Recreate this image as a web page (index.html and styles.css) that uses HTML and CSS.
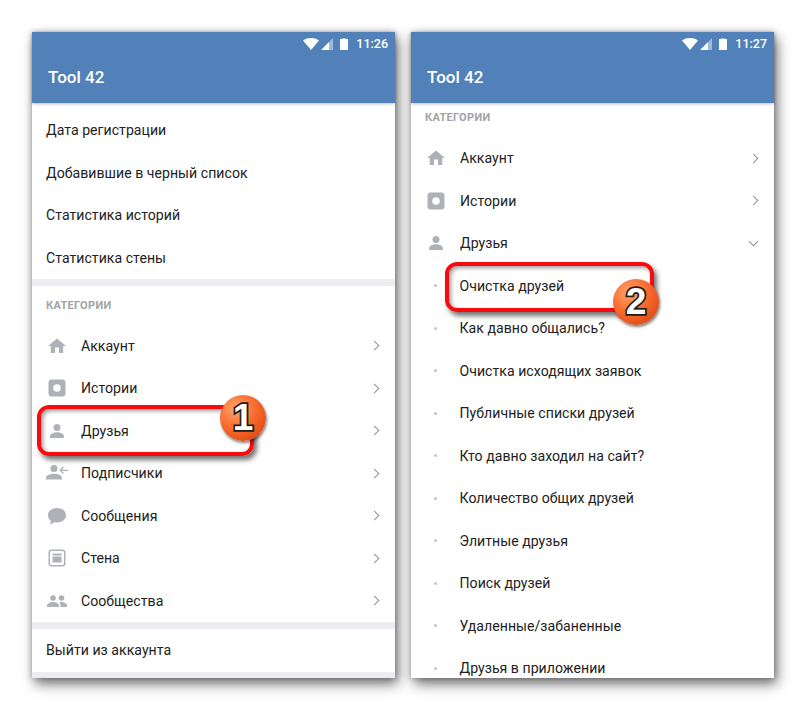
FILE: index.html
```html
<!DOCTYPE html>
<html lang="en">

<head>
    <meta charset="UTF-8">
    <title>Tool 42</title>
    <link rel="stylesheet" href="styles.css">
</head>

<body>
    <svg class="defs" width="0" height="0">
        <symbol id="i-home" viewBox="0 0 22 22"><path d="M9 18v-5.500h4V18h4.200v-7H20L11 3.500 2 11h2.800v7z"/></symbol>
        <symbol id="i-story" viewBox="0 0 22 22"><path fill-rule="evenodd" d="M5.500 2.500h11a3 3 0 0 1 3 3v11a3 3 0 0 1-3 3h-11a3 3 0 0 1-3-3v-11a3 3 0 0 1 3-3zM11 7.200a3.800 3.800 0 1 0 0 7.600 3.800 3.800 0 0 0 0-7.600z"/></symbol>
        <symbol id="i-person" viewBox="0 0 22 22"><circle cx="11" cy="7.500" r="3.500"/><path d="M4 18v-1.500c0-3 4.500-4.300 7-4.300s7 1.300 7 4.300V18z"/></symbol>
        <symbol id="i-follow" viewBox="0 0 22 22"><circle cx="8" cy="6.500" r="3.500"/><path d="M0 17.500V16c0-3 5-4.300 8-4.300s8 1.300 8 4.300v1.500z"/><path d="M22 7.700h-6.200l2.200-2.200-.9-.9-3.700 3.700 3.700 3.700.9-.9-2.200-2.200H22z"/></symbol>
        <symbol id="i-msg" viewBox="0 0 22 22"><path d="M11 3c5 0 9 3 9 7.200s-4 7.200-9 7.200c-1 0-2-.1-2.900-.4-1 1.200-2.600 2.300-4.300 2.500.7-1 1.100-2.300 1.100-3.700C3.200 14.500 2 12.500 2 10.200 2 6 6 3 11 3z"/></symbol>
        <symbol id="i-wall" viewBox="0 0 22 22"><path fill-rule="evenodd" d="M5.500 2.500h11a3 3 0 0 1 3 3v11a3 3 0 0 1-3 3h-11a3 3 0 0 1-3-3v-11a3 3 0 0 1 3-3zm0 1.500A1.500 1.500 0 0 0 4 5.500v11A1.500 1.500 0 0 0 5.500 18h11a1.500 1.500 0 0 0 1.500-1.500v-11A1.500 1.500 0 0 0 16.500 4z"/><path d="M6.500 6.500h9v2h-9zM6.500 9.500h9v6h-9z"/></symbol>
        <symbol id="i-group" viewBox="0 0 22 22"><circle cx="7" cy="8" r="2.800"/><circle cx="15.500" cy="8" r="2.800"/><path d="M1 17v-1.500c0-2.300 3.600-3.500 6-3.500s6 1.200 6 3.500V17z"/><path d="M14.500 17v-1.700c0-1.300-.6-2.300-1.600-3 .9-.2 1.900-.3 2.600-.3 2.300 0 5.500 1.200 5.500 3.500V17z"/></symbol>
    </svg>

    <div class="phone">
        <div class="header">
            <div class="status">
                <svg class="wifi" width="16" height="12" viewBox="0 0 16 12"><path d="M0 2.500C2 .8 5 0 8 0s6 .8 8 2.500L8 12z"/></svg>
                <svg class="signal" width="12" height="12" viewBox="0 0 12 12"><path class="dim" d="M12 0v12H8V4z"/><path d="M8 4v8H0z"/></svg>
                <svg class="battery" width="8" height="12" viewBox="0 0 8 12"><path class="dim" d="M2 0h4v1H2z"/><path d="M0 1h8v11H0z"/></svg>
                <span class="time">11:26</span>
            </div>
            <div class="title">Tool 42</div>
        </div>
        <div class="screen">
            <div class="list first-list">
                <div class="row">Дата регистрации</div>
                <div class="row">Добавившие в черный список</div>
                <div class="row">Статистика историй</div>
                <div class="row">Статистика стены</div>
            </div>
            <div class="divider"></div>
            <div class="heading">Категории</div>
            <div class="list">
                <div class="row"><svg class="icon"><use href="#i-home"/></svg><span class="label">Аккаунт</span><span class="chevron"></span></div>
                <div class="row"><svg class="icon"><use href="#i-story"/></svg><span class="label">Истории</span><span class="chevron"></span></div>
                <div class="row"><svg class="icon"><use href="#i-person"/></svg><span class="label">Друзья</span><span class="chevron"></span></div>
                <div class="row"><svg class="icon"><use href="#i-follow"/></svg><span class="label">Подписчики</span><span class="chevron"></span></div>
                <div class="row"><svg class="icon"><use href="#i-msg"/></svg><span class="label">Сообщения</span><span class="chevron"></span></div>
                <div class="row"><svg class="icon"><use href="#i-wall"/></svg><span class="label">Стена</span><span class="chevron"></span></div>
                <div class="row"><svg class="icon"><use href="#i-group"/></svg><span class="label">Сообщества</span><span class="chevron"></span></div>
            </div>
            <div class="divider"></div>
            <div class="row">Выйти из аккаунта</div>
            <div class="divider"></div>
        </div>
        <div class="frame frame-one"></div>
        <div class="badge badge-one">1</div>
    </div>

    <div class="phone">
        <div class="header">
            <div class="status">
                <svg class="wifi" width="16" height="12" viewBox="0 0 16 12"><path d="M0 2.500C2 .8 5 0 8 0s6 .8 8 2.500L8 12z"/></svg>
                <svg class="signal" width="12" height="12" viewBox="0 0 12 12"><path class="dim" d="M12 0v12H8V4z"/><path d="M8 4v8H0z"/></svg>
                <svg class="battery" width="8" height="12" viewBox="0 0 8 12"><path class="dim" d="M2 0h4v1H2z"/><path d="M0 1h8v11H0z"/></svg>
                <span class="time">11:27</span>
            </div>
            <div class="title">Tool 42</div>
        </div>
        <div class="screen">
            <div class="heading heading-top">Категории</div>
            <div class="list">
                <div class="row"><svg class="icon"><use href="#i-home"/></svg><span class="label">Аккаунт</span><span class="chevron"></span></div>
                <div class="row"><svg class="icon"><use href="#i-story"/></svg><span class="label">Истории</span><span class="chevron"></span></div>
                <div class="row"><svg class="icon"><use href="#i-person"/></svg><span class="label">Друзья</span><span class="chevron open"></span></div>
                <div class="row sub"><span class="dot"></span><span class="label">Очистка друзей</span></div>
                <div class="row sub"><span class="dot"></span><span class="label">Как давно общались?</span></div>
                <div class="row sub"><span class="dot"></span><span class="label">Очистка исходящих заявок</span></div>
                <div class="row sub"><span class="dot"></span><span class="label">Публичные списки друзей</span></div>
                <div class="row sub"><span class="dot"></span><span class="label">Кто давно заходил на сайт?</span></div>
                <div class="row sub"><span class="dot"></span><span class="label">Количество общих друзей</span></div>
                <div class="row sub"><span class="dot"></span><span class="label">Элитные друзья</span></div>
                <div class="row sub"><span class="dot"></span><span class="label">Поиск друзей</span></div>
                <div class="row sub"><span class="dot"></span><span class="label">Удаленные/забаненные</span></div>
                <div class="row sub"><span class="dot"></span><span class="label">Друзья в приложении</span></div>
            </div>
        </div>
        <div class="frame frame-two"></div>
        <div class="badge badge-two">2</div>
    </div>
</body>

</html>
```

FILE: styles.css
```css
body {
    display: flex;
    gap: 16px;
    margin: 0;
    padding: 32px;
    background-color: #fff;
    font-family: Roboto, Arial, sans-serif;
    color: #222;
}

.defs {
    position: absolute;
}

.phone {
    position: relative;
    display: flex;
    flex-direction: column;
    width: 363px;
    height: 646px;
    box-shadow: 3px 6px 12px rgba(0, 0, 0, 0.55), 0 0 6px rgba(0, 0, 0, 0.25);
}

.header {
    position: relative;
    z-index: 1;
    flex: none;
    height: 71px;
    background-color: #5181b8;
    box-shadow: 0 1px 3px rgba(0, 0, 0, 0.25);
    color: #fff;
}

.status {
    display: flex;
    align-items: center;
    justify-content: flex-end;
    height: 23px;
    padding: 0 7px 0 0;
    fill: #fff;
}

.dim {
    opacity: 0.45;
}

.wifi {
    margin-right: 2px;
}

.battery {
    margin: 0 8px 0 7px;
}

.time {
    font-size: 12.5px;
    font-weight: 500;
}

.title {
    padding: 12px 16px 0;
    font-size: 17px;
    font-weight: 500;
}

.screen {
    flex: 1;
    overflow: hidden;
    background-color: #fff;
}

.first-list {
    padding-top: 6px;
}

.row {
    display: flex;
    align-items: center;
    height: 42.5px;
    padding: 0 14px;
    font-size: 14.1px;
    letter-spacing: 0.03px;
}

.divider {
    height: 7px;
    background-color: #ebedf0;
}

.heading {
    display: flex;
    align-items: flex-end;
    height: 25.5px;
    padding: 0 14px 13px;
    font-size: 11px;
    font-weight: 700;
    letter-spacing: 0.3px;
    text-transform: uppercase;
    color: #a0a3a6;
}

.heading-top {
    height: 21.2px;
}

.icon {
    flex: none;
    width: 22px;
    height: 22px;
    margin-right: 13px;
    fill: #aeb1b8;
}

.dot {
    flex: none;
    width: 3px;
    height: 3px;
    margin: 0 23px 0 9px;
    border-radius: 50%;
    background-color: #c2c4c8;
}

.sub .dot {
    margin-right: 22.5px;
}

.label {
    flex: 1;
}

.chevron {
    width: 6px;
    height: 6px;
    margin-right: 3px;
    border-top: 1.5px solid #909398;
    border-right: 1.5px solid #909398;
    transform: rotate(45deg);
}

.chevron.open {
    margin: -3px 3px 0 0;
    transform: rotate(135deg);
}

.frame {
    position: absolute;
    box-sizing: border-box;
    border: 4.5px solid #f90a0f;
    border-radius: 12px;
    box-shadow: 3px 4px 5px rgba(0, 0, 0, 0.55), inset 2px 2px 4px rgba(0, 0, 0, 0.4);
}

.frame-one {
    left: 5px;
    top: 373px;
    width: 217px;
    height: 51px;
}

.frame-two {
    left: 34px;
    top: 230px;
    width: 209px;
    height: 50px;
}

.badge {
    position: absolute;
    width: 46px;
    height: 46px;
    border-radius: 50%;
    background: radial-gradient(circle at 35% 30%, #ffa56b 0%, #f9692d 45%, #cf3d0b 100%);
    box-shadow: 1px 2px 3px rgba(0, 0, 0, 0.5);
    text-align: center;
    font-family: "Liberation Sans", Arial, sans-serif;
    font-size: 37px;
    font-weight: 700;
    line-height: 46px;
    color: #fff;
    -webkit-text-stroke: 3.5px #1c1c1c;
    paint-order: stroke fill;
}

.badge-one {
    left: 188px;
    top: 363px;
}

.badge-two {
    left: 202px;
    top: 247px;
}
```
